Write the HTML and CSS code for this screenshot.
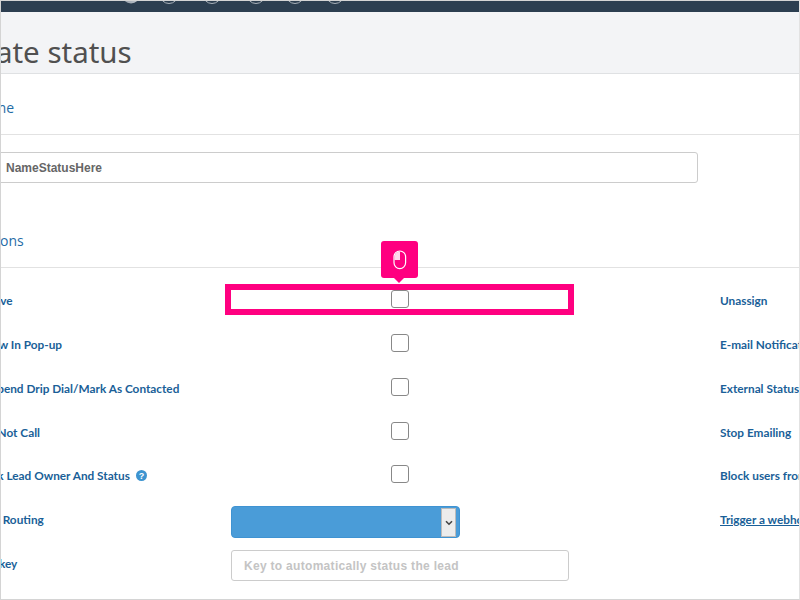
FILE: index.html
```html
<!DOCTYPE html>
<html lang="en">
<head>
<meta charset="utf-8">
<title>Create status</title>
<link rel="stylesheet" href="styles.css">
</head>
<body>
<div class="frame">
  <div class="topbar">
    <svg class="steps" width="800" height="11" viewBox="0 0 800 11">
      <defs><linearGradient id="dot" x1="0" y1="0" x2="1" y2="0"><stop offset="0" stop-color="#8f99a5"/><stop offset="1" stop-color="#c4c9cf"/></linearGradient></defs>
      <circle cx="130" cy="-6.5" r="9" fill="url(#dot)"/>
      <circle cx="168" cy="-6.5" r="9" class="ring"/>
      <circle cx="211" cy="-6.5" r="9" class="ring"/>
      <circle cx="255" cy="-6.5" r="9" class="ring"/>
      <circle cx="294" cy="-6.5" r="9" class="ring"/>
      <circle cx="334" cy="-6.5" r="9" class="ring"/>
    </svg>
  </div>
  <div class="shift">
    <header class="pagehead"><h1>Create status</h1></header>
    <h2 class="section name">Name</h2>
    <div class="namerow"><input class="field namefield" type="text" value="NameStatusHere"></div>
    <h2 class="section options">Options</h2>
    <div class="grid">
      <div class="label">Active</div>
      <div class="ctl"><span class="check"></span></div>
      <div class="label">Unassign</div>

      <div class="label">Show In Pop-up</div>
      <div class="ctl"><span class="check"></span></div>
      <div class="label">E-mail Notifications</div>

      <div class="label">Suspend Drip Dial/Mark As Contacted</div>
      <div class="ctl"><span class="check"></span></div>
      <div class="label">External Status</div>

      <div class="label">Do Not Call</div>
      <div class="ctl"><span class="check"></span></div>
      <div class="label">Stop Emailing</div>

      <div class="label">Lock Lead Owner And Status
        <svg class="help" width="11" height="11" viewBox="0 0 11 11"><circle cx="5.5" cy="5.5" r="5.5" fill="#3d94d0"/><text x="5.5" y="8.6" text-anchor="middle" class="helpq">?</text></svg>
      </div>
      <div class="ctl"><span class="check"></span></div>
      <div class="label">Block users from</div>

      <div class="label routing">Lead Routing</div>
      <div class="ctl"><div class="select"><span class="selectbtn"><svg width="8" height="6" viewBox="0 0 8 6"><path d="M1 1.2 4 4.2 7 1.2" fill="none" stroke="#444" stroke-width="1.6"/></svg></span></div></div>
      <div class="label link">Trigger a webhook</div>

      <div class="label">Hotkey</div>
      <div class="ctl"><input class="field keyfield" type="text" placeholder="Key to automatically status the lead"></div>
      <div class="label"></div>
    </div>
  </div>
  <div class="highlight"></div>
  <div class="tip">
    <svg width="14" height="20" viewBox="0 0 14 20"><rect x="1" y="1" width="11.6" height="17.6" rx="5.8" fill="none" stroke="#fff" stroke-width="1.2"/><path d="M7 1.4A5.2 5.2 0 0 0 1.6 6.8V10H7Z" fill="#fff" opacity=".85"/></svg>
  </div>
</div>
</body>
</html>
```
FILE: styles.css
```css
* { box-sizing: border-box; }
html, body { margin: 0; padding: 0; background: #fff; }
.frame {
  position: relative;
  width: 800px;
  height: 600px;
  border: 1px solid #d4d4d4;
  border-right-color: #e2e2e2;
  overflow: hidden;
  background: #fff;
}
.topbar { height: 11px; background: #2c3e50; }
.steps { display: block; }
.ring { fill: none; stroke: #aab2bb; stroke-width: 1; }
.shift { margin-left: -46px; width: 1100px; }
.pagehead {
  height: 62px;
  background: #f3f4f6;
  border-bottom: 1px solid #dfe1e3;
  padding: 21px 0 0 0;
}
h1 {
  margin: 0 0 0 -6px;
  font: 400 29.5px/38px "Noto Sans", sans-serif;
  color: #505050;
}
.section {
  margin: 0;
  font: 400 14px/20px "Open Sans", sans-serif;
  color: #1f6ca6;
  padding: 24px 0 16px 21px;
  height: 61px;
  border-bottom: 1px solid #e2e2e2;
}
.name { padding-left: 20px; }
.namerow { height: 73px; padding-top: 17px; }
.options { height: 60px; padding: 23px 0 16px 17px; }
.field {
  display: block;
  border: 1px solid #ccc;
  border-radius: 3px;
  background: #fff;
  font: 700 12px "Liberation Sans", sans-serif;
  color: #666;
  outline: none;
}
.namefield { width: 733px; height: 31px; margin-left: 10px; padding: 0 0 0 40px; }
.grid {
  display: grid;
  grid-template-columns: 276px 338px 335px;
  grid-auto-rows: 43.8px;
  padding-top: 25.2px;
}
.label {
  font: 700 11.8px/14px Lato, sans-serif;
  color: #1a5f98;
  padding-left: 24px;
  padding-top: 1px;
  white-space: nowrap;
}
.routing { padding-left: 20px; }
.ctl + .label { padding-left: 151px; }
.link { text-decoration: underline; }
.help { vertical-align: -1px; margin-left: 3px; }
.helpq { font: 700 9px "Liberation Sans", sans-serif; fill: #fff; }
.ctl { text-align: center; margin-top: -3px; }
.check {
  display: inline-block;
  width: 18px;
  height: 18px;
  border: 1px solid #888;
  border-radius: 3px;
  background: #fff;
}
.select {
  margin-top: -3px;
  width: 229px;
  height: 32px;
  background: #4a9cd8;
  border: 1px solid #3f93d2;
  border-radius: 4px;
  padding: 1px 3px 0 0;
  display: flex;
  justify-content: flex-end;
}
.selectbtn {
  width: 15px;
  height: 29px;
  background: #ececec;
  border: 1px solid #bbb;
  display: flex;
  align-items: center;
  justify-content: center;
}
.keyfield { width: 338px; height: 31px; margin-top: -3px; padding: 1px 0 0 12px; letter-spacing: .3px; }
.keyfield::placeholder { color: #c4c4c4; opacity: 1; }
.highlight {
  position: absolute;
  left: 224px;
  top: 283px;
  width: 349px;
  height: 31px;
  border: 6px solid #ff0080;
}
.tip {
  position: absolute;
  left: 380px;
  top: 240px;
  width: 37px;
  height: 37px;
  background: #ff0080;
  border-radius: 3px;
  display: flex;
  align-items: center;
  justify-content: center;
}
.tip::after {
  content: "";
  position: absolute;
  left: 13px;
  top: 37px;
  border: 5px solid transparent;
  border-top-color: #ff0080;
  border-bottom: 0;
}
```
